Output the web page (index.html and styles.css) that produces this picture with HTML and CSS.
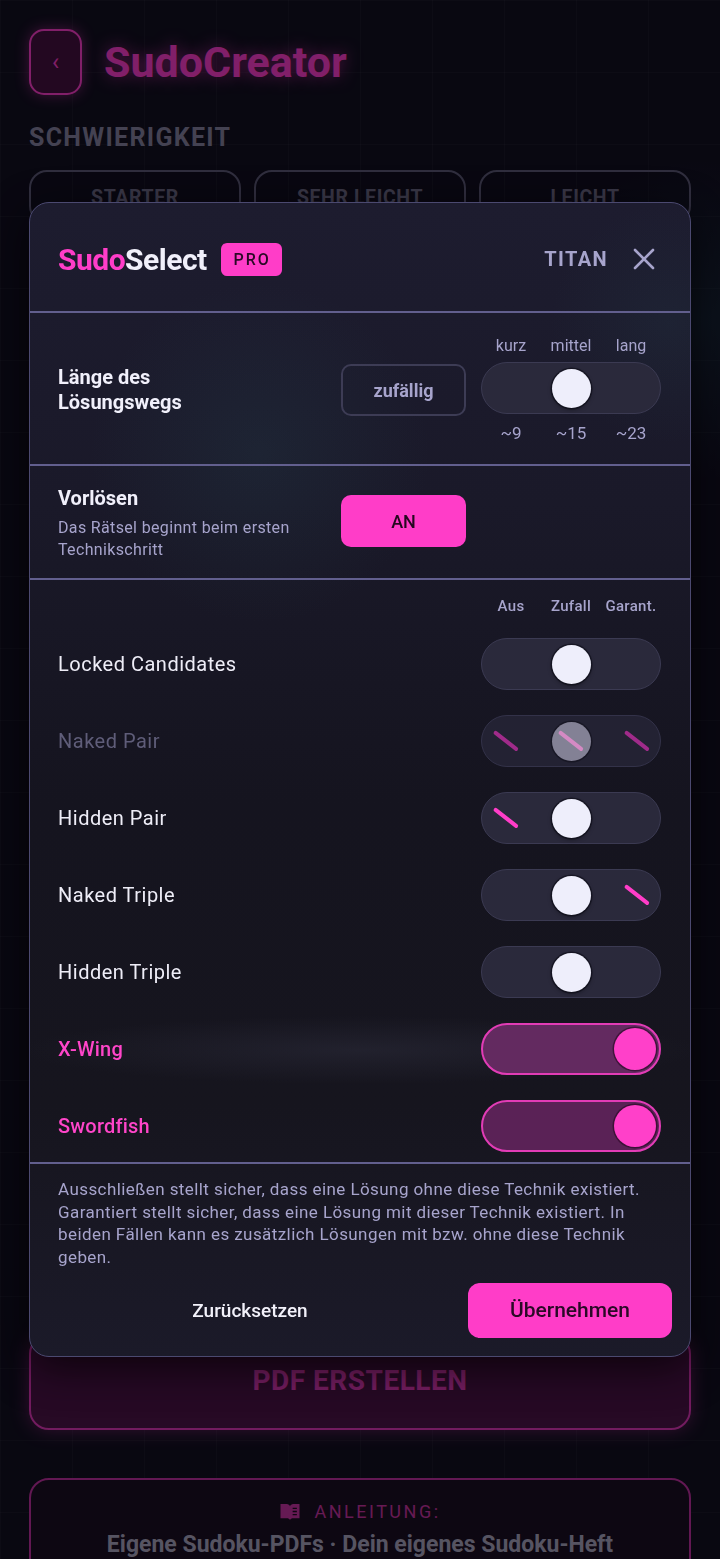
FILE: index.html
```html
<!DOCTYPE html>
<html lang="de">
<head>
<meta charset="utf-8">
<title>SudoSelect</title>
<link rel="stylesheet" href="styles.css">
</head>
<body>
<div class="page">
  <header class="app-header">
    <div class="back-btn">‹</div>
    <h1 class="app-title">SudoCreator</h1>
  </header>
  <div class="section-label">SCHWIERIGKEIT</div>
  <div class="level-row">
    <div class="level-btn">STARTER</div>
    <div class="level-btn">SEHR LEICHT</div>
    <div class="level-btn">LEICHT</div>
  </div>
  <div class="hidden-content"></div>
  <div class="pdf-btn">PDF ERSTELLEN</div>
  <div class="guide-card">
    <div class="guide-kicker">
      <svg class="book" viewBox="0 0 20 18" width="22" height="19"><path d="M1 2h6c1.5 0 2.5 1 3 2v13c-.5-1-1.5-1.5-3-1.5H1z M19 2h-6c-1.5 0-2.5 1-3 2v13c.5-1 1.5-1.5 3-1.5h6z" fill="currentColor"/><path d="M12.5 6h4M12.5 9h4M12.5 12h4" stroke="#1a0a18" stroke-width="1.2"/></svg>
      <span>ANLEITUNG:</span>
    </div>
    <div class="guide-title">Eigene Sudoku-PDFs · Dein eigenes Sudoku-Heft</div>
  </div>
</div>

<div class="overlay">
  <div class="modal">
    <div class="modal-header">
      <div class="brand"><span class="brand-sudo">Sudo</span><span class="brand-select">Select</span></div>
      <span class="pro-badge">PRO</span>
      <span class="tier">TITAN</span>
      <svg class="close" viewBox="0 0 22 22" width="22" height="22"><path d="M2 2L20 20M20 2L2 20" stroke="#a7a4cc" stroke-width="2.6" stroke-linecap="round"/></svg>
    </div>

    <div class="modal-section length-section">
      <div class="opt-label narrow">Länge des Lösungswegs</div>
      <div class="ghost-btn">zufällig</div>
      <div class="scale">
        <div class="scale-labels"><span>kurz</span><span>mittel</span><span>lang</span></div>
        <div class="track">
          <div class="cell left"></div>
          <div class="cell mid"><div class="knob"></div></div>
          <div class="cell right"></div>
        </div>
        <div class="scale-values"><span>~9</span><span>~15</span><span>~23</span></div>
      </div>
    </div>

    <div class="modal-section presolve-section">
      <div class="opt-text">
        <div class="opt-label">Vorlösen</div>
        <div class="opt-sub">Das Rätsel beginnt beim ersten Technikschritt</div>
      </div>
      <div class="pink-btn">AN</div>
    </div>

    <div class="modal-section tech-section">
      <div class="tech-head">
        <div class="scale-labels strong"><span>Aus</span><span>Zufall</span><span>Garant.</span></div>
      </div>

      <div class="tech-row">
        <span class="tech-name">Locked Candidates</span>
        <div class="track">
          <div class="cell left"></div>
          <div class="cell mid"><div class="knob"></div></div>
          <div class="cell right"></div>
        </div>
      </div>

      <div class="tech-row disabled">
        <span class="tech-name">Naked Pair</span>
        <div class="track">
          <div class="cell left"><span class="slash dim"></span></div>
          <div class="cell mid"><div class="knob ghost"><span class="slash light"></span></div></div>
          <div class="cell right"><span class="slash dim"></span></div>
        </div>
      </div>

      <div class="tech-row">
        <span class="tech-name">Hidden Pair</span>
        <div class="track">
          <div class="cell left"><span class="slash"></span></div>
          <div class="cell mid"><div class="knob"></div></div>
          <div class="cell right"></div>
        </div>
      </div>

      <div class="tech-row">
        <span class="tech-name">Naked Triple</span>
        <div class="track">
          <div class="cell left"></div>
          <div class="cell mid"><div class="knob"></div></div>
          <div class="cell right"><span class="slash"></span></div>
        </div>
      </div>

      <div class="tech-row">
        <span class="tech-name">Hidden Triple</span>
        <div class="track">
          <div class="cell left"></div>
          <div class="cell mid"><div class="knob"></div></div>
          <div class="cell right"></div>
        </div>
      </div>

      <div class="tech-row on">
        <span class="tech-name">X-Wing</span>
        <div class="track on light-on">
          <div class="cell left"></div>
          <div class="cell mid"></div>
          <div class="cell right"><div class="knob pink"></div></div>
        </div>
      </div>

      <div class="tech-row on">
        <span class="tech-name">Swordfish</span>
        <div class="track on">
          <div class="cell left"></div>
          <div class="cell mid"></div>
          <div class="cell right"><div class="knob pink"></div></div>
        </div>
      </div>
    </div>

    <div class="modal-footer">
      <p class="footer-note">Ausschließen stellt sicher, dass eine Lösung ohne diese Technik existiert. Garantiert stellt sicher, dass eine Lösung mit dieser Technik existiert. In beiden Fällen kann es zusätzlich Lösungen mit bzw. ohne diese Technik geben.</p>
      <div class="footer-actions">
        <div class="text-btn">Zurücksetzen</div>
        <div class="apply-btn">Übernehmen</div>
      </div>
    </div>
  </div>
</div>
</body>
</html>
```

FILE: styles.css
```css
* { box-sizing: border-box; margin: 0; padding: 0; }

html, body { height: 100%; overflow: hidden; }

body {
  font-family: Roboto, "Noto Sans", "Liberation Sans", sans-serif;
  color: #eeedf7;
  background-color: #0f0e19;
  background-image:
    radial-gradient(circle at 260px 460px, rgba(40, 110, 120, 0.25), transparent 220px),
    radial-gradient(circle at 700px 320px, rgba(40, 110, 120, 0.22), transparent 160px),
    linear-gradient(rgba(255, 255, 255, 0.035) 1px, transparent 1px),
    linear-gradient(90deg, rgba(255, 255, 255, 0.035) 1px, transparent 1px);
  background-size: auto, auto, 72px 72px, 72px 72px;
}

/* ---------- underlying page ---------- */
.page {
  padding: 29px;
  display: flex;
  flex-direction: column;
}

.app-header {
  display: flex;
  align-items: center;
  gap: 22px;
  height: 66px;
}

.back-btn {
  width: 53px;
  height: 66px;
  border: 2px solid #ff3dc8;
  border-radius: 15px;
  background: #420f39;
  color: #ff3dc8;
  display: flex;
  align-items: center;
  justify-content: center;
  font-size: 24px;
  box-shadow: 0 0 14px rgba(255, 61, 200, 0.45);
}

.app-title {
  font-size: 43px;
  font-weight: 700;
  color: #ff3dc8;
  letter-spacing: 0;
  text-shadow: 0 0 16px rgba(255, 61, 200, 0.6);
}

.section-label {
  margin-top: 29px;
  font-size: 25px;
  line-height: 28px;
  font-weight: 700;
  color: #84829a;
  letter-spacing: 1.3px;
}

.level-row {
  margin-top: 18px;
  display: grid;
  grid-template-columns: repeat(3, 1fr);
  gap: 13px;
}

.level-btn {
  height: 54px;
  border: 2px solid #5d5b73;
  border-radius: 18px;
  display: flex;
  align-items: center;
  justify-content: center;
  font-size: 19.5px;
  font-weight: 700;
  color: #6f6d84;
  letter-spacing: 0.6px;
}

.hidden-content { height: 1110px; }

.pdf-btn {
  height: 96px;
  border: 2px solid #e036b4;
  border-radius: 20px;
  background: #4a1240;
  color: #e63ab8;
  display: flex;
  align-items: center;
  justify-content: center;
  font-size: 28px;
  font-weight: 700;
  letter-spacing: 0.5px;
  padding-bottom: 4px;
  box-shadow: 0 0 18px rgba(255, 61, 200, 0.35);
}

.guide-card {
  margin-top: 48px;
  border: 2px solid #c02f9c;
  border-radius: 20px;
  padding: 21px 20px;
  display: flex;
  flex-direction: column;
  align-items: center;
  gap: 9px;
  background: #170d1a;
}

.guide-kicker {
  display: flex;
  align-items: center;
  gap: 13px;
  color: #c8329f;
  font-size: 18px;
  letter-spacing: 2.5px;
}

.guide-title {
  font-size: 23px;
  font-weight: 700;
  color: #a9a7bb;
}

/* ---------- overlay + modal ---------- */
.overlay {
  position: fixed;
  inset: 0;
  background: rgba(3, 2, 9, 0.5);
  padding: 202px 29px 0;
}

.modal {
  border: 1px solid #4b4970;
  border-radius: 20px;
  overflow: hidden;
  background-color: #181726;
  background-image:
    radial-gradient(circle at 230px 250px, rgba(45, 90, 100, 0.16), transparent 170px),
    radial-gradient(circle at 640px 120px, rgba(45, 90, 100, 0.12), transparent 120px),
    linear-gradient(180deg, #1d1c2f 0px, #1a1929 300px, #15141f 600px, #16151e 900px, #1b1a29 1154px);
  box-shadow: 0 12px 40px rgba(0, 0, 0, 0.65);
}

.modal-header {
  height: 110px;
  display: flex;
  align-items: center;
  padding: 4px 35px 0 28px;
  border-bottom: 2px solid #625f8e;
}

.brand {
  font-size: 30px;
  font-weight: 700;
  letter-spacing: -0.5px;
}
.brand-sudo { color: #ff3dc8; }
.brand-select { color: #f1f0fb; }

.pro-badge {
  margin-left: 14px;
  width: 61px;
  height: 33px;
  border-radius: 6px;
  background: #ff3dc8;
  color: #2a0926;
  font-size: 16px;
  font-weight: 500;
  letter-spacing: 2px;
  display: flex;
  align-items: center;
  justify-content: center;
  padding-left: 2px;
}

.tier {
  margin-left: auto;
  color: #a7a4cc;
  font-size: 20px;
  font-weight: 700;
  letter-spacing: 1.4px;
}

.close { margin-left: 25px; }

.modal-section {
  border-bottom: 2px solid #625f8e;
  padding-left: 28px;
  padding-right: 29px;
}

.length-section,
.presolve-section {
  display: grid;
  grid-template-columns: 1fr 125px 180px;
  column-gap: 15px;
  align-items: center;
}

.length-section { padding-top: 24px; padding-bottom: 21px; }
.presolve-section { padding-top: 20px; padding-bottom: 17px; }

.opt-label {
  font-size: 20px;
  font-weight: 700;
  line-height: 25px;
  color: #f1f0fb;
}
.opt-label.narrow { max-width: 190px; }

.opt-sub {
  margin-top: 6px;
  font-size: 16px;
  line-height: 22px;
  color: #a7a4cc;
  letter-spacing: 0.35px;
}

.ghost-btn {
  height: 52px;
  border: 2px solid #3d3c55;
  border-radius: 10px;
  display: flex;
  align-items: center;
  justify-content: center;
  font-size: 18px;
  font-weight: 700;
  color: #a7a4cc;
}

.pink-btn {
  grid-column: 2;
  align-self: start;
  margin-top: 9px;
  height: 52px;
  border-radius: 10px;
  background: #ff3dc8;
  display: flex;
  align-items: center;
  justify-content: center;
  font-size: 18px;
  font-weight: 500;
  color: #25081f;
}

.scale { display: flex; flex-direction: column; }

.scale-labels,
.scale-values {
  display: grid;
  grid-template-columns: repeat(3, 1fr);
  text-align: center;
  color: #a7a4cc;
}
.scale-labels { font-size: 16px; line-height: 18px; margin-bottom: 7px; }
.scale-labels.strong { font-size: 15px; font-weight: 500; letter-spacing: 0.3px; margin-bottom: 0; width: 180px; }
.scale-values { font-size: 17px; line-height: 20px; margin-top: 9px; }

/* track / knob */
.track {
  width: 180px;
  height: 52px;
  border: 1.5px solid #3b3a52;
  border-radius: 26px;
  background: #2a293b;
  padding: 0 3.5px;
  display: grid;
  grid-template-columns: repeat(3, 1fr);
  align-items: center;
}

.cell {
  display: flex;
  align-items: center;
  justify-content: center;
  height: 40px;
}
.cell.left { justify-content: flex-start; }
.cell.right { justify-content: flex-end; }
.cell.left .slash, .cell.right .slash { margin: 0 5px; }

.knob {
  width: 39px;
  height: 39px;
  border-radius: 50%;
  background: #eeeefb;
  box-shadow: 0 0 0 1.5px rgba(10, 10, 20, 0.55), 0 2px 4px rgba(0, 0, 0, 0.35);
  display: flex;
  align-items: center;
  justify-content: center;
}

.knob.ghost {
  background: #838195;
  box-shadow: 0 0 0 1.5px rgba(10, 10, 20, 0.45);
}

.slash {
  display: block;
  width: 30px;
  height: 3.5px;
  border-radius: 2px;
  background: #ff3dc8;
  transform: rotate(38deg);
}
.slash.dim { background: #a02b8a; }
.slash.light { background: #d58ac4; }

.track.on {
  border: 2px solid #e23cb6;
  background: #5a2256;
  padding: 0 3px;
}
.track.on.light-on { background: #632a60; }

.knob.pink {
  width: 42px;
  height: 42px;
  background: #ff40c9;
  box-shadow: 0 0 0 1.5px rgba(40, 8, 35, 0.6);
}

/* technique section */
.tech-section {
  padding-top: 17px;
  padding-bottom: 10px;
  background-image: radial-gradient(ellipse 340px 34px at 50% 470px, rgba(48, 48, 64, 0.45), transparent);
}

.tech-head {
  display: flex;
  justify-content: flex-end;
  margin-bottom: 23px;
}

.tech-row {
  display: flex;
  align-items: center;
  justify-content: space-between;
  height: 52px;
}
.tech-row + .tech-row { margin-top: 25px; }

.tech-name {
  font-size: 20px;
  color: #eeedf7;
  letter-spacing: 0.5px;
}

.tech-row.disabled .tech-name { color: #5f5d79; }
.tech-row.disabled .track { background: #232233; border-color: #333249; }

.tech-row.on .tech-name { color: #ff45c9; font-weight: 500; letter-spacing: 0.2px; }

/* footer */
.modal-footer {
  padding: 14px 18px 18px 28px;
}

.footer-note {
  padding-right: 11px;
  font-size: 17px;
  line-height: 22.7px;
  color: #a7a4cc;
  letter-spacing: 0.42px;
}

.footer-actions {
  margin-top: 14px;
  display: flex;
  align-items: center;
  gap: 26px;
}

.text-btn {
  flex: 1;
  text-align: center;
  font-size: 19px;
  font-weight: 500;
  color: #f2f1fa;
}

.apply-btn {
  width: 204px;
  height: 55px;
  border-radius: 12px;
  background: #ff3dc8;
  display: flex;
  align-items: center;
  justify-content: center;
  font-size: 21px;
  font-weight: 500;
  color: #2a0926;
}
```
